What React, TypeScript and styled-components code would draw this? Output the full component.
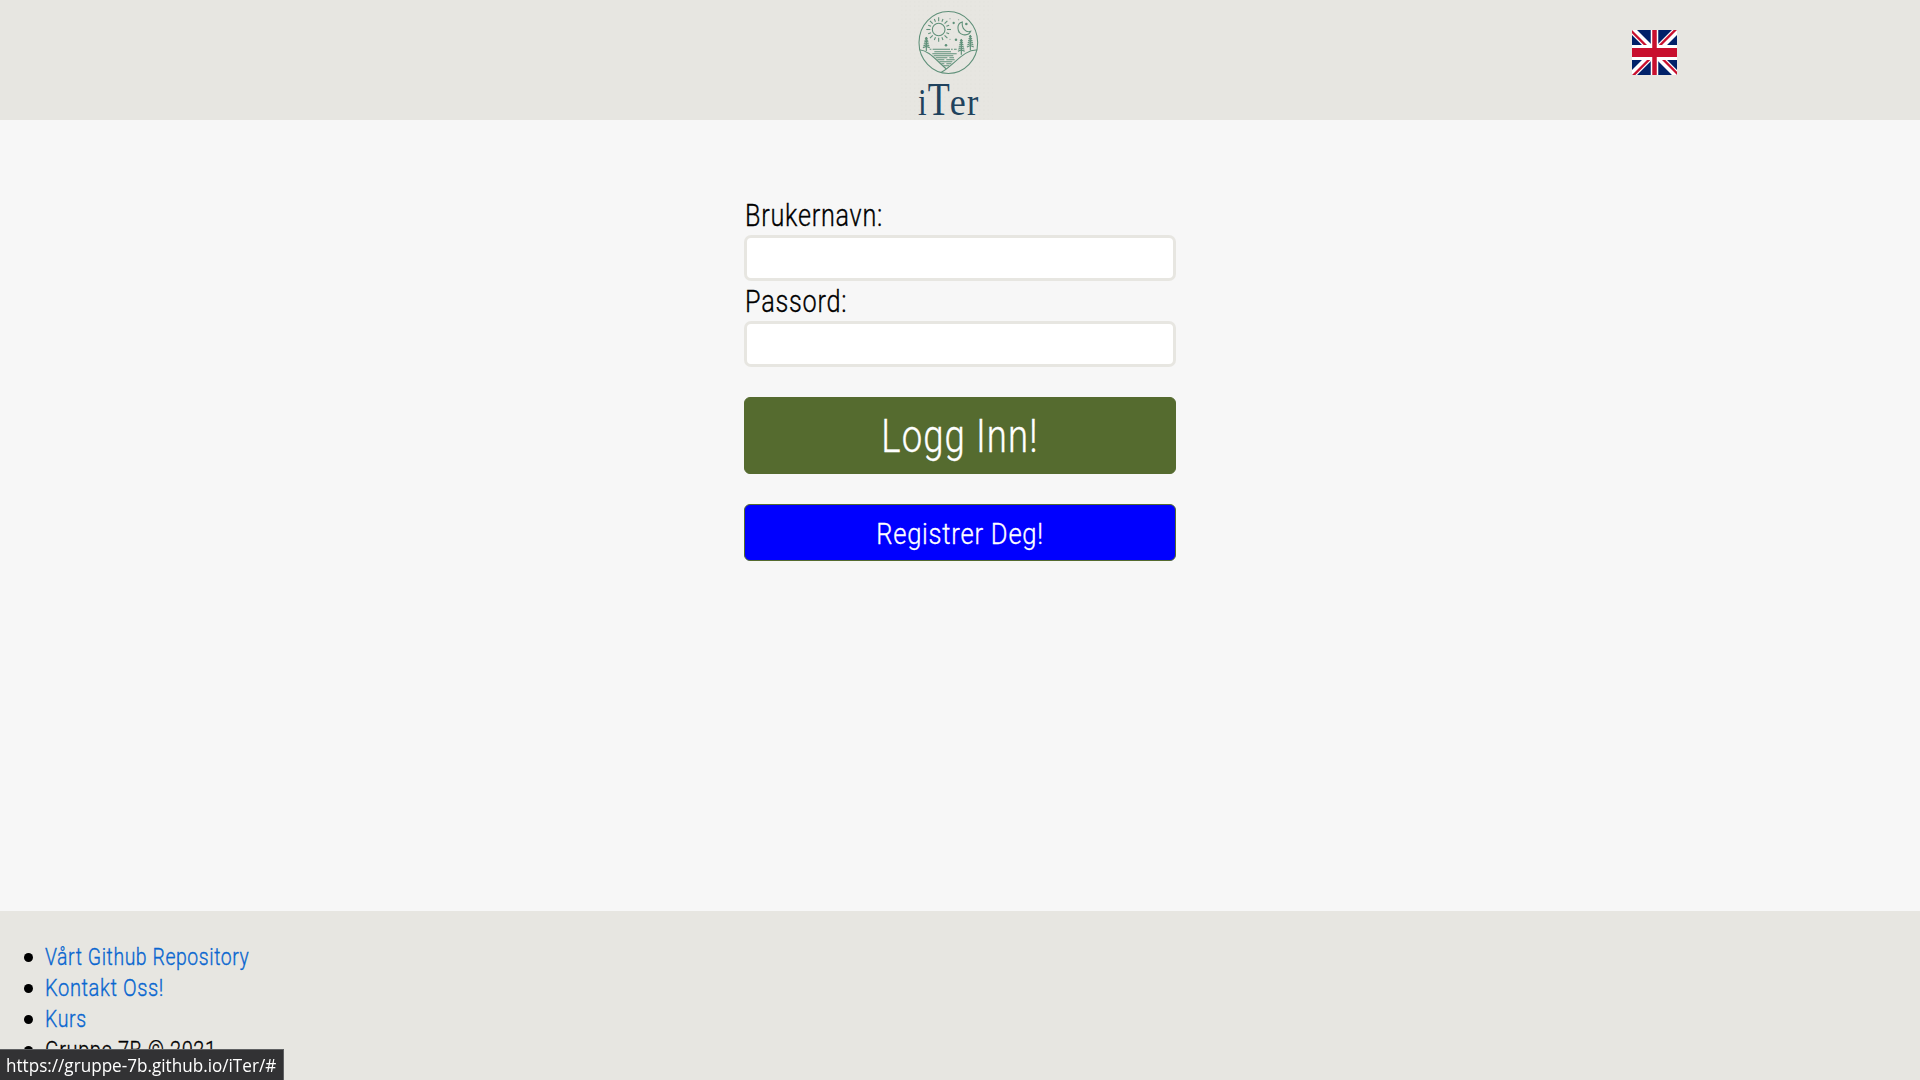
import React from "react";
import styled, { createGlobalStyle } from "styled-components";

const GlobalStyle = createGlobalStyle`
  * { box-sizing: border-box; }
  html, body { margin: 0; height: 100%; overflow: hidden; }
  body { background: #f7f7f7; color: #000; font-family: "Roboto", "Liberation Sans", sans-serif; font-weight: 300; }
`;

const Page = styled.div`
  height: 1080px;
  display: flex;
  flex-direction: column;
  overflow: hidden;
`;

const Header = styled.header`
  height: 120px;
  flex: none;
  background: #e7e6e1;
  display: grid;
  grid-template-columns: 1fr 100px 1fr;
  padding-right: 20px;
`;

const LogoLink = styled.a`
  grid-column: 2;
  display: block;
  height: 120px;
`;

const LanguageButton = styled.button`
  grid-column: 3;
  justify-self: end;
  margin: 30px 223px 0 0;
  width: 45px;
  height: 45px;
  padding: 0;
  border: 0;
  background: none;
  svg { display: block; }
`;

const Main = styled.main`
  flex: 1;
  display: flex;
  justify-content: center;
  align-items: flex-start;
  padding-top: 75px;
`;

const Form = styled.form`
  width: 432px;
  display: flex;
  flex-direction: column;
`;

const Narrow = styled.span<{ $scale: number; $origin?: string }>`
  display: inline-block;
  white-space: nowrap;
  letter-spacing: 0.03em;
  -webkit-text-stroke: 0.35px currentColor;
  transform: scaleX(${(p) => p.$scale});
  transform-origin: ${(p) => p.$origin ?? "left"} center;
`;

const Label = styled.label`
  height: 40px;
  padding-left: 0.5px;
  font-size: 30.5px;
  line-height: 41px;
`;

const Input = styled.input`
  height: 46px;
  border: 3px solid #e7e6e1;
  border-radius: 7px;
  background: #fff;
  outline: none;
`;

const Button = styled.button<{ $primary?: boolean }>`
  height: ${(p) => (p.$primary ? 77 : 57)}px;
  margin-top: 30px;
  padding: 0;
  border: 1px solid #556b2f;
  border-radius: 6px;
  background: ${(p) => (p.$primary ? "#556b2f" : "#0000ff")};
  color: #fff;
  font-family: inherit;
  font-weight: inherit;
  font-size: ${(p) => (p.$primary ? 45.5 : 30.2)}px;
  line-height: ${(p) => (p.$primary ? 77 : 57)}px;
`;

const Footer = styled.footer`
  height: 169px;
  flex: none;
  background: #e7e6e1;
  padding-top: 31px;
`;

const LinkList = styled.ul`
  list-style: none;
  margin: 0;
  padding: 0 0 0 24px;
`;

const LinkItem = styled.li`
  height: 31px;
  display: flex;
  align-items: center;
  gap: 12px;
  font-size: 23.5px;
  line-height: 31px;
  &::before {
    content: "";
    width: 9px;
    height: 9px;
    border-radius: 50%;
    background: #000;
  }
  a { color: #0a66d0; text-decoration: none; }
`;

const StatusBar = styled.div`
  position: fixed;
  left: 0;
  bottom: 0;
  width: 284px;
  height: 31px;
  padding-left: 6px;
  border-top: 1px solid #5f6062;
  border-right: 1px solid #5f6062;
  background: #323234;
  color: #fff;
  font-family: "Open Sans", "Noto Sans", sans-serif;
  font-weight: 400;
  font-size: 17.5px;
  line-height: 31px;
`;

const Url = styled(Narrow)`
  letter-spacing: 0;
  -webkit-text-stroke: 0;
`;

const Tree = ({ x, top, base }: { x: number; top: number; base: number }) => {
  const step = (base - top - 10) / 6;
  return (
    <g>
      <path d={`M${x} ${top}V${base}`} strokeWidth="3.500" />
      {[1, 2, 3, 4, 5, 6].map((n) => (
        <path
          key={n}
          d={`M${x - 2.5 - n * 1.3} ${top + n * step}L${x} ${top + (n - 0.7) * step}L${x + 2.5 + n * 1.3} ${top + n * step}`}
          strokeWidth="3.200"
        />
      ))}
    </g>
  );
};

const Logo = () => (
  <svg width="100" height="120" viewBox="0 0 300 360" role="img">
    <defs>
      <pattern id="grain" width="13" height="13" patternUnits="userSpaceOnUse">
        <circle cx="5" cy="5" r="2" fill="#dcdcd6" />
      </pattern>
    </defs>
    <rect x="4" width="274" height="360" fill="url(#grain)" opacity="0.55" />
    <g fill="none" stroke="#5f9079" strokeWidth="3.200">
      <ellipse cx="145" cy="127.500" rx="88" ry="93" />
      <circle cx="116" cy="88.500" r="19" />
      {Array.from({ length: 16 }, (_, i) => {
        const a = (i * Math.PI) / 8;
        const r = i % 2 ? 34 : 37;
        return (
          <path
            key={i}
            d={`M${116 + 25 * Math.cos(a)} ${88.5 + 25 * Math.sin(a)}L${116 + r * Math.cos(a)} ${88.5 + r * Math.sin(a)}`}
          />
        );
      })}
      <path d="M187 66C169 70 169 100 190 104C201 106 209 101 212 94C198 99 184 85 187 66Z" />
      <Tree x={79} top={111} base={153} />
      <Tree x={184} top={117} base={164} />
      <Tree x={211} top={105} base={151} />
      <path d="M58 149C85 151 104 176 139 207" />
      <path d="M232 150C192 147 163 195 124 217" />
      <path d="M89 148H94M98 148H150M153 148H158M162 148H170M103 155H153M97 161H170M101 167H160M107 173H142M148 173H162M112 179H133M139 179H164M118 185H157M124 191H133M139 191H154M130 197H148" />
    </g>
    <g fill="#5f9079">
      <circle cx="161" cy="69" r="3.500" />
      <circle cx="199" cy="72" r="3.800" />
      <circle cx="168" cy="119" r="3.800" />
      <circle cx="138" cy="136" r="3.800" />
      <circle cx="150" cy="56" r="1.500" />
      <circle cx="176" cy="59" r="1.500" />
      <circle cx="177" cy="96" r="1.500" />
      <circle cx="150" cy="118" r="1.500" />
    </g>
    <g fill="#20425d" fontFamily="'Liberation Serif', serif">
      <text x="54" y="344" fontSize="116" textLength="26" lengthAdjust="spacingAndGlyphs">i</text>
      <text x="83" y="344" fontSize="139" textLength="66" lengthAdjust="spacingAndGlyphs">T</text>
      <text x="149" y="344" fontSize="113" textLength="48" lengthAdjust="spacingAndGlyphs">e</text>
      <text x="201" y="344" fontSize="113" textLength="34" lengthAdjust="spacingAndGlyphs">r</text>
    </g>
  </svg>
);

const UnionFlag = () => (
  <svg width="45" height="45" viewBox="0 0 60 30" preserveAspectRatio="none">
    <clipPath id="quarters">
      <path d="M30 15h30v15zv15H0zH0V0zV0h30z" />
    </clipPath>
    <path fill="#012169" d="M0 0h60v30H0z" />
    <path d="M0 0L60 30M60 0L0 30" stroke="#fff" strokeWidth="6" />
    <path d="M0 0L60 30M60 0L0 30" clipPath="url(#quarters)" stroke="#c8102e" strokeWidth="4" />
    <path d="M30 0v30M0 15h60" stroke="#fff" strokeWidth="10" />
    <path d="M30 0v30M0 15h60" stroke="#c8102e" strokeWidth="6" />
  </svg>
);

export default function App() {
  return (
    <Page>
      <GlobalStyle />
      <Header>
        <LogoLink><Logo /></LogoLink>
        <LanguageButton type="button"><UnionFlag /></LanguageButton>
      </Header>
      <Main>
        <Form>
          <Label htmlFor="user"><Narrow $scale={0.826}>Brukernavn:</Narrow></Label>
          <Input id="user" type="text" />
          <Label htmlFor="pass"><Narrow $scale={0.828}>Passord:</Narrow></Label>
          <Input id="pass" type="password" />
          <Button $primary type="button"><Narrow $scale={0.803} $origin="center">Logg Inn!</Narrow></Button>
          <Button type="button"><Narrow $scale={0.847} $origin="center">Registrer Deg!</Narrow></Button>
        </Form>
      </Main>
      <Footer>
        <LinkList>
          <LinkItem><a><Narrow $scale={0.825}>Vårt Github Repository</Narrow></a></LinkItem>
          <LinkItem><a><Narrow $scale={0.855}>Kontakt Oss!</Narrow></a></LinkItem>
          <LinkItem><a><Narrow $scale={0.83}>Kurs</Narrow></a></LinkItem>
          <LinkItem><Narrow $scale={0.85}>Gruppe 7B © 2021</Narrow></LinkItem>
        </LinkList>
      </Footer>
      <StatusBar><Url $scale={0.978}>https://gruppe-7b.github.io/iTer/#</Url></StatusBar>
    </Page>
  );
}
